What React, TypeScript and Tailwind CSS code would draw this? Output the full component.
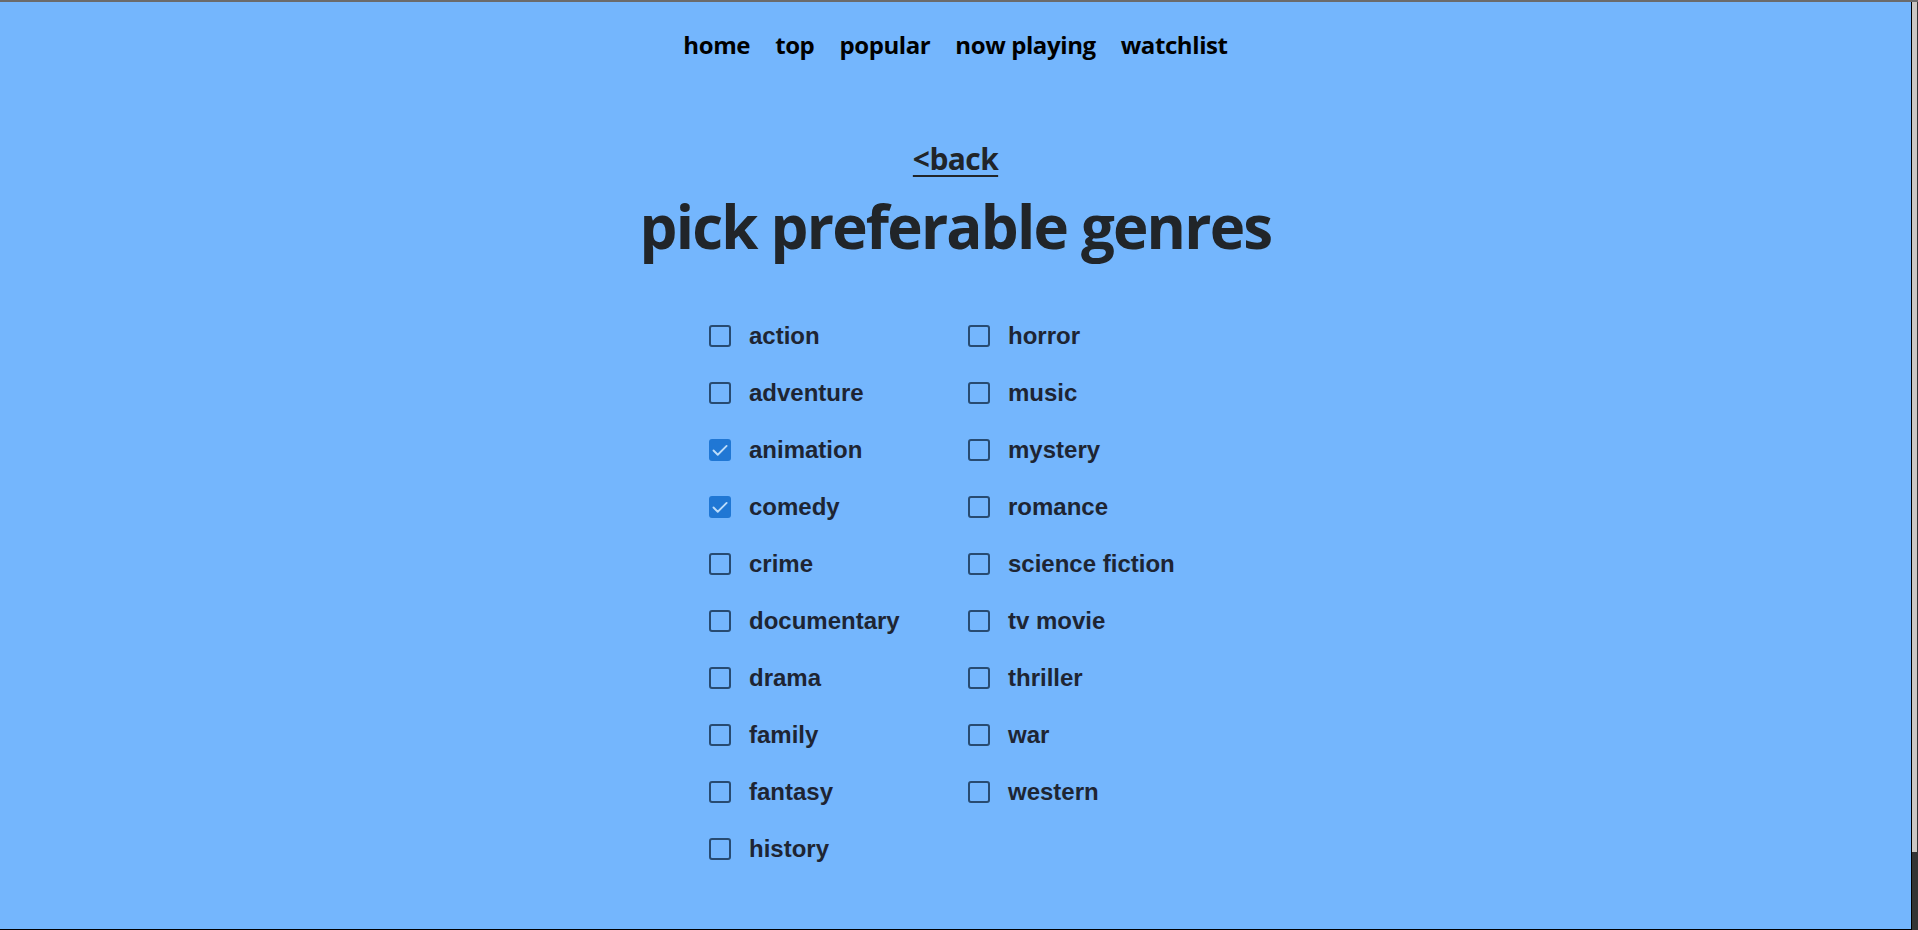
import React, { useState } from 'react';

const genres = [
  'action',
  'adventure',
  'animation',
  'comedy',
  'crime',
  'documentary',
  'drama',
  'family',
  'fantasy',
  'history',
  'horror',
  'music',
  'mystery',
  'romance',
  'science fiction',
  'tv movie',
  'thriller',
  'war',
  'western',
];

const navLinks = ['home', 'top', 'popular', 'now playing', 'watchlist'];

function GenreBox({ checked }: { checked: boolean }) {
  if (checked) {
    return (
      <span className="w-[22px] h-[22px] rounded-[3px] bg-[#2077d4] flex items-center justify-center shrink-0">
        <svg width="20" height="20" viewBox="0 0 16 16" fill="none">
          <path d="M2.8 8.4l3.4 3.4L13.3 4.7" stroke="#bcdcfa" strokeWidth="1.5" strokeLinecap="round" strokeLinejoin="round" />
        </svg>
      </span>
    );
  }
  return <span className="w-[22px] h-[22px] rounded-[3px] border-[2.5px] border-[#284b71] shrink-0" />;
}

export default function App() {
  const [picked, setPicked] = useState<string[]>(['animation', 'comedy']);

  const toggle = (g: string) => {
    setPicked((prev) => (prev.includes(g) ? prev.filter((x) => x !== g) : [...prev, g]));
  };

  return (
    <div className="h-[930px] w-full flex flex-col bg-[#74b6fd] overflow-hidden">
      <div className="h-[2px] bg-[#6b6b6b] shrink-0" />
      <div className="flex-1 flex min-h-0">
        <div className="flex-1 flex flex-col items-center border-b border-black overflow-hidden">
          <nav className="flex gap-[25px] pt-[25px] font-['Open_Sans',sans-serif] font-bold text-[24px] text-black leading-[1.5]">
            {navLinks.map((l) => (
              <a key={l} href="#" className="tracking-[-0.4px]">
                {l}
              </a>
            ))}
          </nav>

          <a
            href="#"
            className="mt-[73px] font-['Open_Sans',sans-serif] font-bold text-[30px] leading-[1.5] text-[#212529] underline underline-offset-[5px] decoration-2 tracking-[-0.6px]"
          >
            &lt;back
          </a>

          <h1 className="mt-[9px] font-['Open_Sans',sans-serif] font-bold text-[60px] leading-[1.2] text-[#212529] tracking-[-1.8px]">
            pick preferable genres
          </h1>

          <div className="mt-[45px] w-[493px] grid grid-cols-[259px_234px] grid-rows-[repeat(10,57px)] grid-flow-col font-['Liberation_Sans',Arial,sans-serif] font-bold text-[24px] text-[#1e2533]">
            {genres.map((g) => (
              <label key={g} className="flex items-center gap-[18px] cursor-pointer" onClick={() => toggle(g)}>
                <GenreBox checked={picked.includes(g)} />
                <span className="whitespace-nowrap">{g}</span>
              </label>
            ))}
          </div>
        </div>
        <div className="w-[7px] border-l border-black bg-[#343434] shrink-0">
          <div className="h-[850px] w-[5px] bg-[#cbc7c3]" />
        </div>
      </div>
    </div>
  );
}
